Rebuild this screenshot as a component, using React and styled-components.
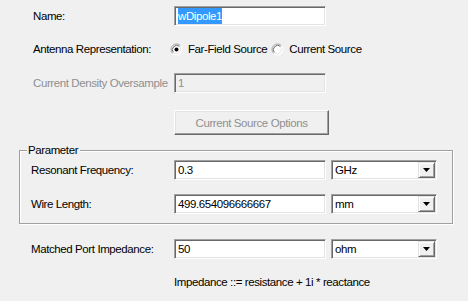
import React from "react";
import styled, { createGlobalStyle } from "styled-components";

const Global = createGlobalStyle`
  html, body { margin: 0; padding: 0; background: #f0f0f0; }
  body { font-family: "Liberation Sans", Arial, sans-serif; font-size: 11.5px; letter-spacing: -0.4px; color: #000; }
`;

const Page = styled.div`
  width: 468px;
  height: 301px;
  box-sizing: border-box;
  padding: 6px 0 0 0;
  display: flex;
  flex-direction: column;
  overflow: hidden;
`;

const Row = styled.div`
  display: flex;
  align-items: center;
  height: ${(p) => p.$h || 20}px;
  margin-top: ${(p) => p.$mt || 0}px;
  padding-left: ${(p) => (p.$pl != null ? p.$pl : 33)}px;
`;

const Label = styled.span`
  width: ${(p) => p.$w || 141}px;
  flex: none;
  white-space: nowrap;
  color: ${(p) => (p.$disabled ? "#8f8f8f" : "#000")};
`;

const Sunken = styled.div`
  box-sizing: border-box;
  height: 20px;
  width: ${(p) => p.$w || 152}px;
  flex: none;
  border-top: 1px solid #a0a0a0;
  border-left: 1px solid #a0a0a0;
  border-right: 1px solid #ffffff;
  border-bottom: 1px solid #ffffff;
  box-shadow: inset 1px 1px 0 #696969, inset -1px -1px 0 #e3e3e3;
  background: ${(p) => (p.$disabled ? "#f0f0f0" : "#fff")};
  color: ${(p) => (p.$disabled ? "#8f8f8f" : "#000")};
  display: flex;
  align-items: center;
  padding-left: 3px;
  white-space: nowrap;
  overflow: hidden;
`;

const Selected = styled.span`
  background: #3399ff;
  color: #fff;
  padding: 1px 0;
  line-height: 14px;
`;

const Combo = styled(Sunken)`
  width: 106px;
  margin-left: 5px;
  padding: 2px 1px 2px 3px;
  justify-content: space-between;
`;

const DropBtn = styled.div`
  box-sizing: border-box;
  width: 17px;
  height: 16px;
  flex: none;
  background: #f0f0f0;
  border-top: 1px solid #e3e3e3;
  border-left: 1px solid #e3e3e3;
  border-right: 1px solid #696969;
  border-bottom: 1px solid #696969;
  box-shadow: inset 1px 1px 0 #fff, inset -1px -1px 0 #a0a0a0;
  display: flex;
  align-items: center;
  justify-content: center;
`;

const RadioWrap = styled.label`
  display: flex;
  align-items: center;
  gap: 5px;
  margin-left: ${(p) => p.$ml || 0}px;
  white-space: nowrap;
`;

const Button = styled.div`
  box-sizing: border-box;
  width: 155px;
  height: 25px;
  border-top: 1px solid #fff;
  border-left: 1px solid #fff;
  border-right: 1px solid #696969;
  border-bottom: 1px solid #696969;
  box-shadow: inset -1px -1px 0 #a0a0a0, inset 1px 1px 0 #e3e3e3;
  color: #8f8f8f;
  display: flex;
  align-items: center;
  justify-content: center;
  white-space: nowrap;
`;

const Group = styled.div`
  position: relative;
  box-sizing: border-box;
  margin: 15px 0 0 19px;
  width: 434px;
  height: 74px;
  border: 1px solid #a0a0a0;
  box-shadow: inset 1px 1px 0 #fff, 1px 1px 0 #fff;
  padding-top: 9px;
  display: flex;
  flex-direction: column;
`;

const Legend = styled.span`
  position: absolute;
  left: 7px;
  top: -8px;
  padding: 0 2px 0 1px;
  background: #f0f0f0;
  line-height: 14px;
`;

const Note = styled.div`
  margin-top: 16px;
  padding-left: 174px;
  line-height: 14px;
`;

function Radio({ checked }) {
  return (
    <svg width="13" height="13" viewBox="0 0 13 13">
      <circle cx="6.5" cy="6.5" r="5.5" fill="#fff" stroke="none" />
      <path d="M2.6 10.4 A5.5 5.5 0 0 1 10.4 2.6" fill="none" stroke="#a0a0a0" />
      <path d="M3.4 9.6 A4.4 4.4 0 0 1 9.6 3.4" fill="none" stroke="#696969" />
      <path d="M10.4 2.6 A5.5 5.5 0 0 1 2.6 10.4" fill="none" stroke="#ffffff" />
      <path d="M9.6 3.4 A4.4 4.4 0 0 1 3.4 9.6" fill="none" stroke="#e3e3e3" />
      {checked && <circle cx="6.5" cy="6.5" r="2" fill="#000" />}
    </svg>
  );
}

function Arrow() {
  return (
    <svg width="7" height="4" viewBox="0 0 7 4">
      <path d="M0 0 H7 L3.5 4 Z" fill="#000" />
    </svg>
  );
}

function ComboBox({ value }) {
  return (
    <Combo>
      <span>{value}</span>
      <DropBtn>
        <Arrow />
      </DropBtn>
    </Combo>
  );
}

export default function App() {
  return (
    <>
      <Global />
      <Page>
        <Row>
          <Label>Name:</Label>
          <Sunken>
            <Selected>wDipole1</Selected>
          </Sunken>
        </Row>
        <Row $mt={13}>
          <Label $w={137}>Antenna Representation:</Label>
          <RadioWrap>
            <Radio checked />
            Far-Field Source
          </RadioWrap>
          <RadioWrap $ml={4}>
            <Radio />
            Current Source
          </RadioWrap>
        </Row>
        <Row $mt={14}>
          <Label $disabled>Current Density Oversample</Label>
          <Sunken $disabled>1</Sunken>
        </Row>
        <Row $mt={17} $h={25}>
          <Label />
          <Button>Current Source Options</Button>
        </Row>
        <Group>
          <Legend>Parameter</Legend>
          <Row $pl={11}>
            <Label $w={143}>Resonant Frequency:</Label>
            <Sunken>0.3</Sunken>
            <ComboBox value="GHz" />
          </Row>
          <Row $pl={11} $mt={14}>
            <Label $w={143}>Wire Length:</Label>
            <Sunken>499.654096666667</Sunken>
            <ComboBox value="mm" />
          </Row>
        </Group>
        <Row $mt={15} $pl={31}>
          <Label $w={143}>Matched Port Impedance:</Label>
          <Sunken>50</Sunken>
          <ComboBox value="ohm" />
        </Row>
        <Note>Impedance ::= resistance + 1i * reactance</Note>
      </Page>
    </>
  );
}
